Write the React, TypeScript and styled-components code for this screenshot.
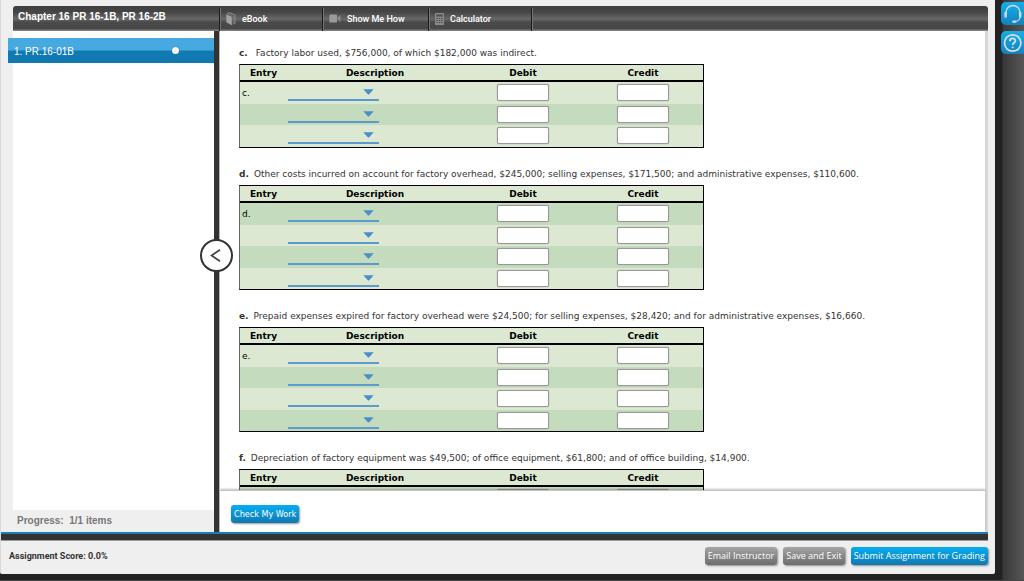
import React from "react";
import styled, { createGlobalStyle, css } from "styled-components";

const sans = `"Liberation Sans", Arial, Helvetica, sans-serif`;
const verdana = `"DejaVu Sans", Verdana, sans-serif`;
const narrowVerdana = `"DejaVu Sans Condensed", "DejaVu Sans", Tahoma, sans-serif`;
const openSans = `"Open Sans", "Noto Sans", sans-serif`;
const roboto = `Roboto, "Liberation Sans", sans-serif`;

const GlobalStyle = createGlobalStyle`
  *, *::before, *::after { box-sizing: border-box; }
  body { margin: 0; background: #222; font-family: ${sans}; color: #333; }
  button, input, select { font: inherit; }
`;

const Page = styled.div`
  display: flex;
  height: 100vh;
  min-height: 400px;
  border-bottom: 1px solid #444;
`;

const Sheet = styled.div`
  flex: 1;
  min-width: 0;
  display: flex;
  flex-direction: column;
  margin-bottom: 6px;
  padding-top: 6px;
  background: #efefef;
  border-left: 1px solid #d9d9d9;
  border-radius: 0 0 2px 2px;
`;

const TopBar = styled.header`
  display: flex;
  flex: none;
  height: 25px;
  margin: 0 7px 0 12px;
  border-radius: 3px 3px 0 0;
  background: linear-gradient(#3e3e3e 0%, #464646 25%, #686868 52%, #4a4a4a 65%, #474747 90%, #8a8a8a 100%);
`;

const Title = styled.h1`
  flex: none;
  width: 206px;
  margin: 0;
  padding: 4px 5px 0;
  font-size: 10px;
  line-height: 13px;
  font-weight: bold;
  color: #fff;
  white-space: nowrap;
`;

const Tools = styled.nav`
  display: flex;
  flex: 1;
  min-width: 0;
  padding-top: 2px;
`;

const Tool = styled.button<{ $width: number }>`
  display: flex;
  align-items: center;
  gap: 6px;
  width: ${(p) => p.$width}px;
  padding: 0 0 2px 6px;
  border: 0;
  border-left: 1px solid #1c1c1c;
  box-shadow: inset 1px 0 0 #747474;
  background: none;
  color: #fff;
  font-family: ${roboto};
  font-size: 9px;
  font-weight: 500;
  line-height: 12px;
  text-align: left;
  white-space: nowrap;
`;

const ToolEnd = styled.span`
  width: 2px;
  border-left: 1px solid #1c1c1c;
  border-right: 1px solid #747474;
`;

const Body = styled.div`
  display: flex;
  flex: 1;
  min-height: 0;
  padding-left: 7px;
`;

const Sidebar = styled.aside`
  flex: none;
  width: 206px;
  display: flex;
  flex-direction: column;
`;

const ItemList = styled.ul`
  flex: 1;
  list-style: none;
  margin: 0;
  padding: 7px 0 0;
  background: linear-gradient(90deg, #efefef 5px, #fff 5px);
`;

const ItemLink = styled.a`
  display: flex;
  align-items: center;
  justify-content: space-between;
  height: 25px;
  padding: 2px 35px 0 6px;
  background: linear-gradient(#47a9e1 0 48%, #127ab3 52%, #1079b2);
  color: #fff;
  font-size: 10px;
  line-height: 14px;
  text-decoration: none;
`;

const StatusDot = styled.span`
  width: 7px;
  height: 7px;
  margin-bottom: 2px;
  border-radius: 50%;
  background: #f4f4f0;
  box-shadow: 0 0 1px #555;
`;

const Progress = styled.div`
  flex: none;
  height: 22px;
  padding: 4px 9px;
  font-size: 10px;
  line-height: 14px;
  font-weight: bold;
  color: #777;
  white-space: pre;
`;

const Divider = styled.div`
  position: relative;
  z-index: 2;
  flex: none;
  width: 6px;
  background: #333;
  border-right: 1px solid #b5b5b5;
`;

const CollapseButton = styled.button`
  position: absolute;
  top: 208px;
  left: -14px;
  width: 33px;
  height: 33px;
  display: grid;
  place-items: center;
  padding: 0 2px 1px 0;
  border: 2px solid #333;
  border-radius: 50%;
  background: #fff;
`;

const Content = styled.main`
  flex: 1;
  min-width: 0;
  display: flex;
  flex-direction: column;
  margin-right: 7px;
  background: #fff;
  border-right: 3px solid #d8d8d8;
`;

const Questions = styled.div`
  flex: 1;
  min-height: 0;
  overflow: hidden;
  padding: 16px 19px 0;
  font-family: ${verdana};
`;

const Question = styled.section`
  margin-bottom: 20px;
`;

const Prompt = styled.p`
  margin: 0 0 5px;
  font-size: 9px;
  line-height: 12px;
  color: #333;
  white-space: nowrap;
`;

const Mark = styled.b<{ $wide?: boolean }>`
  margin-right: ${(p) => (p.$wide ? 8 : 5)}px;
`;

const Ledger = styled.table`
  width: 465px;
  table-layout: fixed;
  border-collapse: separate;
  border-spacing: 0;
  border: 1px solid #000;
  border-left-color: #666;
  background: #dce8d2;
  color: #000;
  font-size: 9px;
  line-height: 12px;
`;

const Head = styled.th<{ $width?: number }>`
  width: ${(p) => (p.$width ? p.$width + "px" : "auto")};
  height: 17px;
  padding: 0;
  border-bottom: 2px solid #000;
  font-weight: bold;
  text-align: center;
`;

const Row = styled.tr<{ $dark: boolean }>`
  height: 21px;
  background: ${(p) => (p.$dark ? "#c4dbbe" : "#dce8d2")};
  &:nth-child(odd) {
    height: 22px;
  }
`;

const MarkCell = styled.td`
  padding: 0 2px;
  vertical-align: middle;
`;

const Cell = styled.td`
  padding: 2px 1px 0;
  vertical-align: top;
`;

const Picker = styled.div`
  display: grid;
  align-items: center;
  justify-items: end;
  width: 91px;
  height: 17px;
  border-bottom: 2px solid #5a9bcb;
  & > * {
    grid-area: 1 / 1;
  }
  svg {
    margin-right: 5px;
    pointer-events: none;
  }
`;

const PickerSelect = styled.select`
  appearance: none;
  width: 100%;
  height: 15px;
  padding: 0 18px 0 2px;
  border: 0;
  background: transparent;
`;

const Amount = styled.input`
  display: block;
  width: 52px;
  height: 17px;
  margin: 0 auto;
  padding: 0 3px;
  border: 1px solid #999;
  border-radius: 2px;
  background: #fff;
  box-shadow: 0 0 1px #888;
  text-align: right;
`;

const Actions = styled.div`
  position: relative;
  flex: none;
  height: 42px;
  padding: 14px 11px 0;
  background: #fff;
  border-top: 1px solid #c4c4c4;
  box-shadow: 0 -1px 2px rgba(0, 0, 0, 0.25);
`;

const Rule = styled.div`
  flex: none;
  height: 9px;
  margin-right: 7px;
  background: #333;
  border-top: 2px solid #1a7db4;
  border-bottom: 1px solid #999;
`;

const Footer = styled.footer`
  flex: none;
  display: flex;
  align-items: center;
  justify-content: space-between;
  height: 33px;
  padding: 0 7px 3px 8px;
`;

const Score = styled.span`
  font-family: ${roboto};
  font-size: 9px;
  line-height: 12px;
  font-weight: bold;
`;

const ButtonRow = styled.div`
  display: flex;
  gap: 6px;
`;

const PillButton = styled.button<{ $primary?: boolean; $narrow?: boolean }>`
  display: block;
  height: 18px;
  padding: 0 3px;
  border: 0;
  border-radius: 3px;
  color: #fff;
  font-family: ${(p) => (p.$narrow ? narrowVerdana : openSans)};
  font-size: 9px;
  line-height: 18px;
  white-space: nowrap;
  box-shadow: 1px 1px 2px rgba(0, 0, 0, 0.4);
  ${(p) =>
    p.$primary
      ? css`
          background: linear-gradient(#05aeef, #1178b2);
        `
      : css`
          background: linear-gradient(#a5a5a5, #6d6d6d);
        `}
`;

const Rail = styled.div`
  flex: none;
  width: 29px;
  display: flex;
  flex-direction: column;
  gap: 6px;
  padding: 2px 0 0 6px;
  background: linear-gradient(90deg, #222 7px, #383838 8px, #555 28px);
`;

const RailButton = styled.button`
  display: grid;
  place-items: center start;
  height: 23px;
  padding: 0 0 0 2px;
  border: 0;
  border-radius: 5px 0 0 5px;
  background: linear-gradient(#16aeea, #1382be);
`;

const BookIcon = () => (
  <svg width="10" height="14" viewBox="0 0 10 14" aria-hidden="true">
    <path d="M0.3 2.2 5.8 4.8V13.2L0.3 10.2Z" fill="#a2a2a2" />
    <path d="M0.8 1.8 3 0.6 8.8 2.8" fill="none" stroke="#8d8d8d" strokeWidth="1" />
    <path d="M1.8 1.6 7.2 4V12.4" fill="none" stroke="#777" strokeWidth="1" />
    <path d="M9 2.8V11.2L7.6 12" fill="none" stroke="#929292" strokeWidth="1" />
  </svg>
);

const CameraIcon = () => (
  <svg width="12" height="9" viewBox="0 0 12 9" aria-hidden="true">
    <rect x="0.3" y="0.5" width="7.8" height="8" rx="1.3" fill="#999" />
    <path d="M11.5 0.8V8.2L8.8 5.6V3.4Z" fill="#888" />
  </svg>
);

const CalculatorIcon = () => (
  <svg width="9" height="12" viewBox="0 0 9 12" aria-hidden="true">
    <rect x="0" y="0" width="9" height="12" rx="0.6" fill="#8a8a8a" />
    <rect x="1.2" y="1.4" width="6.6" height="2.2" fill="#505050" />
    {[5, 7, 9].map((y) => (
      <path key={y} d={`M1.4 ${y}.5H7.8`} stroke="#4c4c4c" strokeWidth="1.1" strokeDasharray="1.5 0.9" />
    ))}
  </svg>
);

const Caret = () => (
  <svg width="11" height="6" viewBox="0 0 11 6" aria-hidden="true">
    <path d="M0.3 0.3H10.7L6.2 5.2Q5.5 5.8 4.8 5.2Z" fill="#4a90c8" />
  </svg>
);

const HeadsetIcon = () => (
  <svg width="20" height="20" viewBox="0 0 20 20" fill="none" stroke="#d6dfe3" aria-hidden="true">
    <path d="M3 10V8.5A7 7 0 0 1 17 8.5V10" strokeWidth="1.3" />
    <path d="M2.6 9V12.6M17.2 9V12.6" strokeWidth="2.4" strokeLinecap="round" />
    <path d="M17 13.5Q16.5 17 12 17.5" strokeWidth="1.1" />
    <path d="M10.3 17.7H12.2" strokeWidth="2.2" strokeLinecap="round" />
  </svg>
);

const HelpIcon = () => (
  <svg width="20" height="20" viewBox="0 0 20 20" fill="none" stroke="#d6dfe3" aria-hidden="true">
    <circle cx="9.7" cy="10" r="8.2" strokeWidth="1.7" />
    <path d="M6.9 8.2C6.9 4.5 12.5 4.7 12.4 7.9C12.3 9.8 9.7 9.8 9.7 12" strokeWidth="1.8" />
    <circle cx="9.7" cy="14.3" r="0.6" fill="#d6dfe3" strokeWidth="1" />
  </svg>
);

interface Entry {
  mark: string;
  rowMark?: string;
  text: string;
  rows: number;
  darkFirst: boolean;
}

const entries: Entry[] = [
  {
    mark: "c",
    rowMark: "c.",
    text: "Factory labor used, $756,000, of which $182,000 was indirect.",
    rows: 3,
    darkFirst: false,
  },
  {
    mark: "d",
    rowMark: "d.",
    text: "Other costs incurred on account for factory overhead, $245,000; selling expenses, $171,500; and administrative expenses, $110,600.",
    rows: 4,
    darkFirst: true,
  },
  {
    mark: "e",
    rowMark: "e.",
    text: "Prepaid expenses expired for factory overhead were $24,500; for selling expenses, $28,420; and for administrative expenses, $16,660.",
    rows: 4,
    darkFirst: false,
  },
  {
    mark: "f",
    text: "Depreciation of factory equipment was $49,500; of office equipment, $61,800; and of office building, $14,900.",
    rows: 4,
    darkFirst: true,
  },
];

const JournalEntry = ({ mark, rowMark, text, rows, darkFirst }: Entry) => (
  <Question>
    <Prompt>
      <Mark $wide={mark === "c"}>{mark}.</Mark>
      {text}
    </Prompt>
    <Ledger>
      <thead>
        <tr>
          <Head $width={47}>Entry</Head>
          <Head>Description</Head>
          <Head $width={120}>Debit</Head>
          <Head $width={120}>Credit</Head>
        </tr>
      </thead>
      <tbody>
        {Array.from({ length: rows }, (_, i) => (
          <Row key={i} $dark={(i % 2 === 0) === darkFirst}>
            <MarkCell>{i === 0 ? rowMark : null}</MarkCell>
            <Cell>
              <Picker>
                <PickerSelect aria-label={`Entry ${mark} description ${i + 1}`} />
                <Caret />
              </Picker>
            </Cell>
            <Cell>
              <Amount aria-label={`Entry ${mark} debit ${i + 1}`} />
            </Cell>
            <Cell>
              <Amount aria-label={`Entry ${mark} credit ${i + 1}`} />
            </Cell>
          </Row>
        ))}
      </tbody>
    </Ledger>
  </Question>
);

export default function App() {
  return (
    <>
      <GlobalStyle />
      <Page>
        <Sheet>
          <TopBar>
            <Title>Chapter 16 PR 16-1B, PR 16-2B</Title>
            <Tools>
              <Tool $width={103}>
                <BookIcon />
                eBook
              </Tool>
              <Tool $width={106}>
                <CameraIcon />
                Show Me How
              </Tool>
              <Tool $width={103}>
                <CalculatorIcon />
                Calculator
              </Tool>
              <ToolEnd />
            </Tools>
          </TopBar>
          <Body>
            <Sidebar>
              <ItemList>
                <li>
                  <ItemLink href="#pr-16-01b">
                    1. PR.16-01B
                    <StatusDot />
                  </ItemLink>
                </li>
              </ItemList>
              <Progress>{"Progress:  1/1 items"}</Progress>
            </Sidebar>
            <Divider>
              <CollapseButton aria-label="Collapse sidebar">
                <svg width="11" height="13" viewBox="0 0 11 13" aria-hidden="true">
                  <path d="M10 0.8 1.5 6.5 10 12.2" fill="none" stroke="#444" strokeWidth="1.8" />
                </svg>
              </CollapseButton>
            </Divider>
            <Content>
              <Questions>
                {entries.map((entry) => (
                  <JournalEntry key={entry.mark} {...entry} />
                ))}
              </Questions>
              <Actions>
                <PillButton $primary $narrow>
                  Check My Work
                </PillButton>
              </Actions>
            </Content>
          </Body>
          <Rule />
          <Footer>
            <Score>Assignment Score: 0.0%</Score>
            <ButtonRow>
              <PillButton>Email Instructor</PillButton>
              <PillButton>Save and Exit</PillButton>
              <PillButton $primary>Submit Assignment for Grading</PillButton>
            </ButtonRow>
          </Footer>
        </Sheet>
        <Rail>
          <RailButton aria-label="Support">
            <HeadsetIcon />
          </RailButton>
          <RailButton aria-label="Help">
            <HelpIcon />
          </RailButton>
        </Rail>
      </Page>
    </>
  );
}
